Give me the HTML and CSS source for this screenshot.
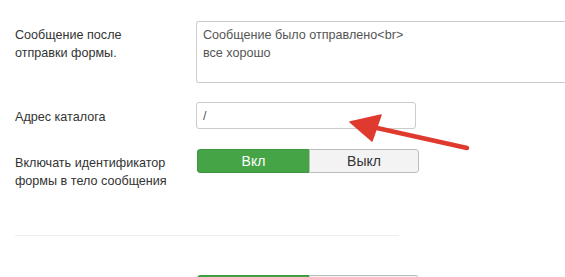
FILE: index.html
```html
<!DOCTYPE html>
<html lang="ru">
<head>
<meta charset="utf-8">
<link rel="stylesheet" href="styles.css">
</head>
<body>
<div class="page">
  <div class="row row-msg">
    <div class="label">Сообщение после<br>отправки формы.</div>
    <div class="textarea">Сообщение было отправлено&lt;br&gt;<br>все хорошо</div>
  </div>
  <div class="row row-path">
    <div class="label label-single">Адрес каталога</div>
    <div class="input">/</div>
  </div>
  <div class="row row-toggle">
    <div class="label">Включать идентификатор<br>формы в тело сообщения</div>
    <div class="toggle">
      <span class="opt opt-on">Вкл</span>
      <span class="opt opt-off">Выкл</span>
    </div>
  </div>
  <div class="divider"></div>
  <div class="row row-last">
    <div class="label"></div>
    <div class="toggle">
      <span class="opt opt-on">&nbsp;</span>
      <span class="opt opt-off">&nbsp;</span>
    </div>
  </div>
</div>
<svg class="arrow" width="565" height="277" viewBox="0 0 565 277">
  <line x1="467" y1="148" x2="368" y2="126" stroke="#e03a2e" stroke-width="4.5" stroke-linecap="round"/>
  <polygon points="350,122 381,115 372,141" fill="#e03a2e" stroke="#e03a2e" stroke-width="1.5" stroke-linejoin="round"/>
</svg>
</body>
</html>
```
FILE: styles.css
```css
html, body {
  margin: 0;
  padding: 0;
  background: #fff;
  overflow: hidden;
}
body {
  width: 565px;
  height: 277px;
  position: relative;
  font-family: "Liberation Sans", Arial, sans-serif;
  font-size: 12.6px;
  line-height: 18px;
  color: #333;
}
.page {
  padding: 21px 0 0 15px;
}
.row {
  display: flex;
  align-items: flex-start;
}
.label {
  width: 181px;
  flex: none;
  padding-top: 5px;
}
.label-single {
  padding-top: 6px;
}
.textarea {
  flex: none;
  width: 369px;
  height: 62px;
  box-sizing: border-box;
  border: 1px solid #ccc;
  border-right: none;
  border-radius: 3px 0 0 3px;
  padding: 4px 6px;
  color: #555;
}
.row-path {
  margin-top: 19px;
}
.input {
  flex: none;
  width: 220px;
  height: 27px;
  box-sizing: border-box;
  border: 1px solid #ccc;
  border-radius: 3px;
  padding: 4px 6px;
  color: #555;
}
.row-toggle {
  margin-top: 20px;
}
.toggle {
  flex: none;
  display: flex;
  width: 222px;
  height: 24px;
  margin-left: 1px;
  box-sizing: border-box;
  border-radius: 3px;
  overflow: hidden;
}
.opt {
  display: flex;
  align-items: center;
  justify-content: center;
  font-size: 14px;
}
.opt-on {
  width: 111px;
  background: #44a446;
  color: #fff;
  border: 1px solid #3c963e;
  border-right: none;
  border-radius: 3px 0 0 3px;
}
.opt-off {
  flex: 1;
  background: #f3f3f3;
  color: #333;
  border: 1px solid #bbb;
  border-radius: 0 3px 3px 0;
}
.divider {
  width: 384px;
  height: 1px;
  background: #eee;
  margin-top: 45px;
}
.row-last {
  margin-top: 39px;
  height: 2px;
  overflow: hidden;
}
.row-last .label {
  padding-top: 0;
}
.arrow {
  position: absolute;
  left: 0;
  top: 0;
  pointer-events: none;
}
```
